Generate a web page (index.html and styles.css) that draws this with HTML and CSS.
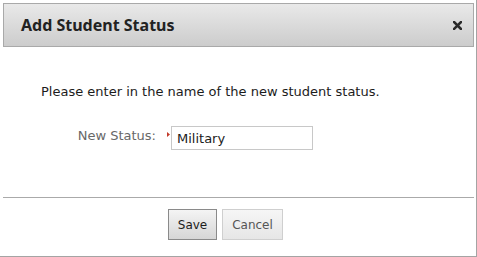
FILE: index.html
```html
<!DOCTYPE html>
<html>
<head>
<meta charset="utf-8">
<link rel="stylesheet" href="styles.css">
</head>
<body>
<div class="dialog">
  <div class="header">
    <span class="title">Add Student Status</span>
    <svg class="close" width="9" height="9" viewBox="0 0 9 9"><path d="M1 1L8 8M8 1L1 8" stroke="#2b2b2b" stroke-width="2.5" stroke-linecap="square"/></svg>
  </div>
  <div class="message">Please enter in the name of the new student status.</div>
  <div class="row">
    <label class="label">New Status:</label>
    <svg class="marker" width="3" height="5" viewBox="0 0 3 5"><polygon points="0,0 3,2.5 0,5" fill="#c23a2a"/></svg>
    <input class="field" type="text" value="Military">
  </div>
  <div class="footer">
    <button class="btn btn-save">Save</button>
    <button class="btn btn-cancel">Cancel</button>
  </div>
</div>
</body>
</html>
```
FILE: styles.css
```css
html, body {
  margin: 0;
  padding: 0;
  background: #ffffff;
}
body {
  font-family: "DejaVu Sans", Verdana, sans-serif;
  font-size: 13px;
  color: #1c1c1c;
}
.dialog {
  box-sizing: border-box;
  width: 477px;
  height: 257px;
  padding: 3px 2px 0 3px;
  border-right: 1px solid #a4a4a4;
  border-bottom: 1px solid #a4a4a4;
  display: flex;
  flex-direction: column;
}
.header {
  box-sizing: border-box;
  height: 44px;
  border: 1px solid #a9a9a9;
  background: linear-gradient(#e9e9e9, #cccccc);
  display: flex;
  align-items: center;
  justify-content: space-between;
  padding: 0 11px 0 17px;
}
.title {
  font-family: "Noto Sans", sans-serif;
  font-weight: bold;
  font-size: 16px;
  line-height: 20px;
  color: #222222;
}
.close {
  display: block;
}
.message {
  margin-top: 37px;
  padding-left: 38px;
  line-height: 16px;
}
.row {
  margin-top: 26px;
  display: flex;
  align-items: flex-start;
}
.label {
  box-sizing: border-box;
  margin-left: 38px;
  width: 117px;
  padding-right: 2px;
  margin-top: 2px;
  text-align: right;
  line-height: 16px;
  color: #686868;
}
.marker {
  display: block;
  margin-left: 9px;
  margin-top: 6px;
}
.field {
  box-sizing: border-box;
  margin: 0 0 0 1px;
  width: 142px;
  height: 24px;
  border: 1px solid #c8c8c8;
  padding: 0 5px;
  font-family: "DejaVu Sans", Verdana, sans-serif;
  font-size: 13px;
  color: #1c1c1c;
  outline: none;
}
.footer {
  margin-top: 47px;
  border-top: 1px solid #aaaaaa;
  padding: 11px 0 0 165px;
  display: flex;
  gap: 5px;
}
.btn {
  box-sizing: border-box;
  height: 31px;
  margin: 0;
  padding: 0;
  font-family: "DejaVu Sans", Verdana, sans-serif;
  font-size: 12px;
  line-height: 14px;
}
.btn-save {
  width: 49px;
  border: 1px solid #8a8a8a;
  background: linear-gradient(#f4f4f4, #d6d6d6);
  color: #1c1c1c;
}
.btn-cancel {
  width: 61px;
  border: 1px solid #cfcfcf;
  background: linear-gradient(#f6f6f6, #e6e6e6);
  color: #555555;
}
```
